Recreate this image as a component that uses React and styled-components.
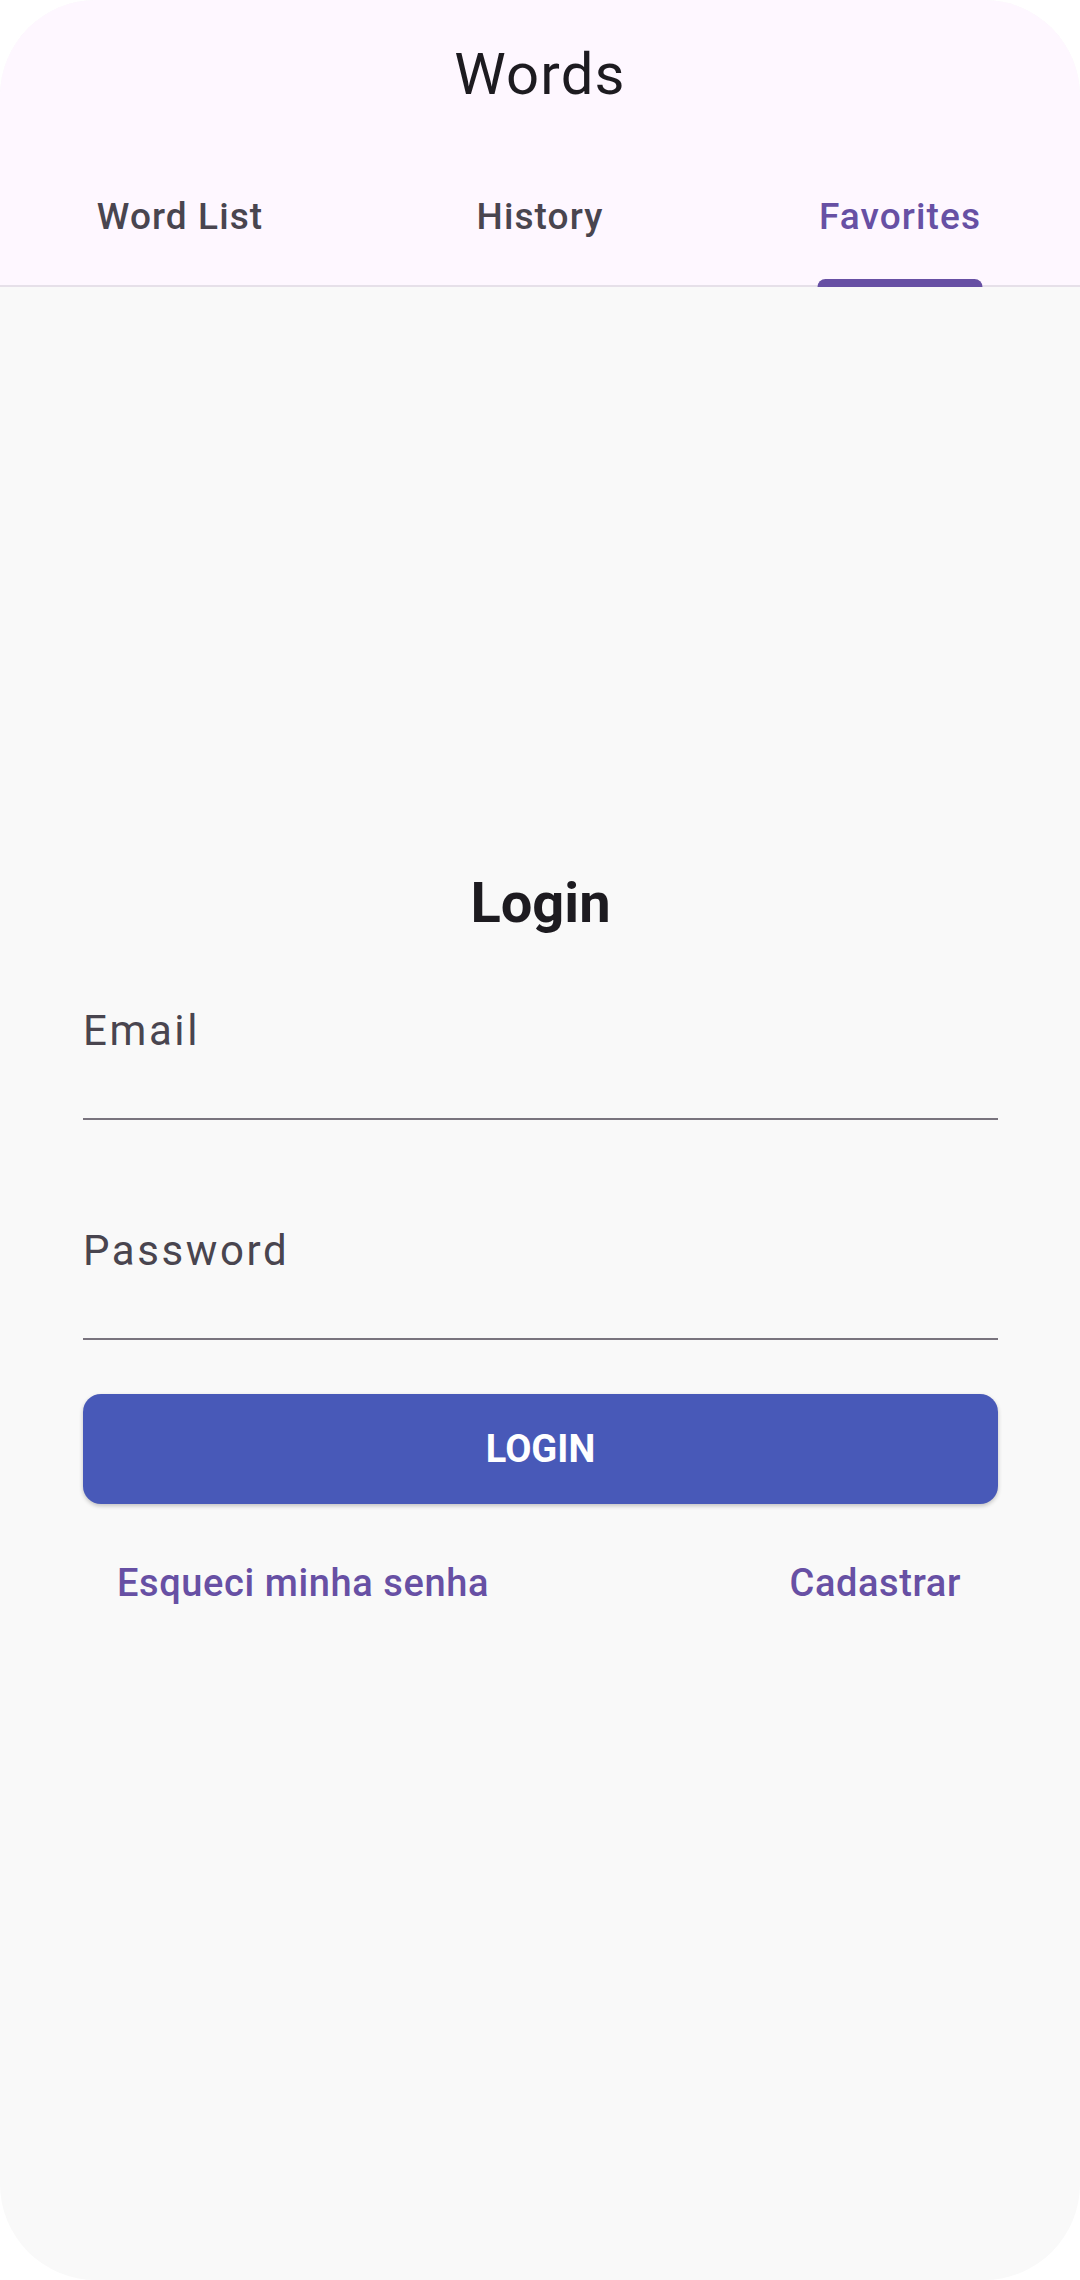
import styled, { createGlobalStyle } from "styled-components";

const GlobalStyle = createGlobalStyle`
    html, body {
        margin: 0;
        padding: 0;
        background: #ffffff;
    }
    * {
        box-sizing: border-box;
    }
`;

const tabs = ["Word List", "History", "Favorites"];

const App = () => {
    const active = 2;

    return (
        <>
            <GlobalStyle />
            <Screen>
                <Header>
                    <TopBar>
                        <Title>Words</Title>
                    </TopBar>
                    <TabBar>
                        {tabs.map((tab, i) => (
                            <Tab key={tab} $active={i === active}>
                                {tab}
                                {i === active && <Indicator />}
                            </Tab>
                        ))}
                    </TabBar>
                </Header>

                <Body>
                    <Form>
                        <Heading>Login</Heading>
                        <Field>
                            <Label>Email</Label>
                        </Field>
                        <Field $spaced>
                            <Label>Password</Label>
                        </Field>
                        <LoginButton>LOGIN</LoginButton>
                        <LinkRow>
                            <LinkButton>Esqueci minha senha</LinkButton>
                            <LinkButton>Cadastrar</LinkButton>
                        </LinkRow>
                    </Form>
                </Body>
            </Screen>
        </>
    );
};

export default App;

const Screen = styled.div`
    width: 1080px;
    height: 2280px;
    border-radius: 96px;
    overflow: hidden;
    background: #f9f9f9;
    display: flex;
    flex-direction: column;
    font-family: Roboto, "Noto Sans", sans-serif;
`
const Header = styled.header`
    background: #fef7ff;
    border-bottom: 2px solid #e6e0e9;
`
const TopBar = styled.div`
    height: 147px;
    display: flex;
    align-items: center;
    justify-content: center;
`
const Title = styled.h1`
    margin: 0;
    font-size: 58px;
    font-weight: 400;
    line-height: 1;
    letter-spacing: 1.2px;
    color: #1d1b20;
`
const TabBar = styled.nav`
    height: 138px;
    display: grid;
    grid-template-columns: repeat(3, 1fr);
`
const Tab = styled.div`
    position: relative;
    display: flex;
    align-items: center;
    justify-content: center;
    font-size: 37px;
    font-weight: 500;
    letter-spacing: 1.1px;
    color: ${p => p.$active ? '#6750a4' : '#49454f'};
`
const Indicator = styled.span`
    position: absolute;
    bottom: -2px;
    left: 50%;
    transform: translateX(-50%);
    width: 165px;
    height: 8px;
    border-radius: 8px 8px 0 0;
    background: #6750a4;
`
const Body = styled.main`
    flex: 1;
    padding: 588px 82px 0 83px;
`
const Form = styled.div`
    display: flex;
    flex-direction: column;
`
const Heading = styled.h2`
    margin: 0 0 79px;
    text-align: center;
    font-size: 56px;
    font-weight: 700;
    line-height: 1;
    color: #1d1b20;
`
const Field = styled.div`
    margin-top: ${p => p.$spaced ? '110px' : '0'};
    height: 110px;
    border-bottom: 2px solid #79747e;
`
const Label = styled.span`
    display: block;
    font-size: 42px;
    line-height: 1;
    letter-spacing: 2.6px;
    color: #49454f;
`
const LoginButton = styled.button`
    margin-top: 54px;
    height: 110px;
    border: none;
    border-radius: 18px;
    background: #4859b8;
    color: #ffffff;
    font-family: Roboto, sans-serif;
    font-size: 38px;
    font-weight: 700;
    box-shadow: 0 2px 4px rgba(0, 0, 0, 0.22);
`
const LinkRow = styled.div`
    margin-top: 60px;
    display: flex;
    justify-content: space-between;
    padding: 0 37px 0 34px;
`
const LinkButton = styled.span`
    font-size: 38px;
    font-weight: 500;
    line-height: 1;
    letter-spacing: 0.6px;
    color: #6750a4;
`
